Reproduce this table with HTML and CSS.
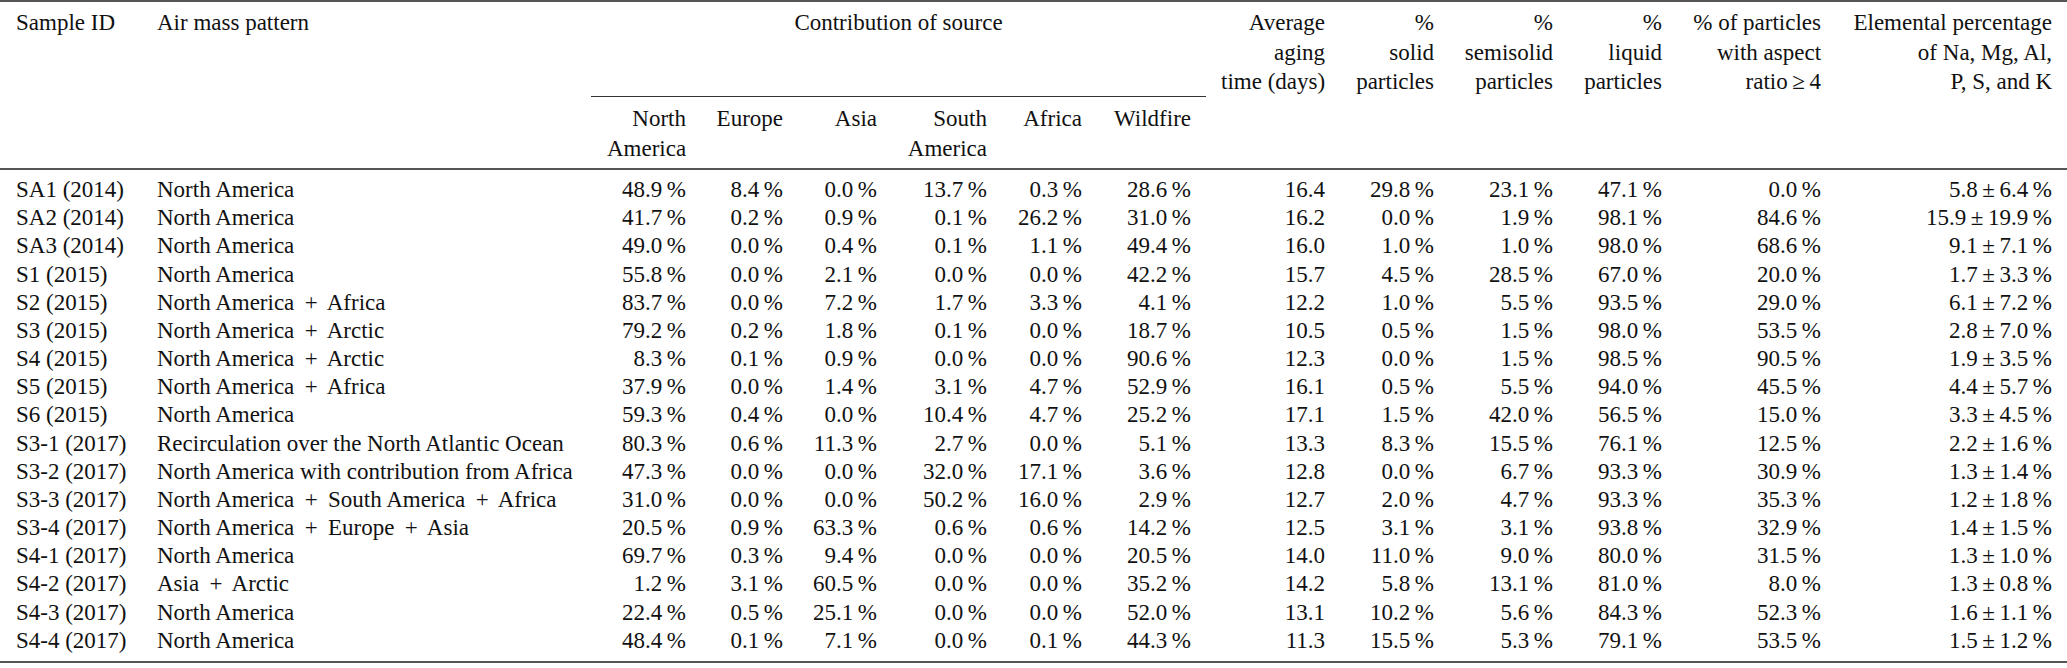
FILE: index.html
```html
<!DOCTYPE html>
<html lang="en">
<head>
<meta charset="utf-8">
<title>Sample table</title>
<link rel="stylesheet" href="styles.css">
</head>
<body>
<table class="data">
  <colgroup>
    <col class="c-id"><col class="c-air"><col class="c-na"><col class="c-eu"><col class="c-as"><col class="c-sa"><col class="c-af"><col class="c-wf"><col class="c-age"><col class="c-sol"><col class="c-semi"><col class="c-liq"><col class="c-asp"><col class="c-el">
  </colgroup>
  <thead>
    <tr class="h1">
      <th rowspan="2" class="l">Sample ID</th>
      <th rowspan="2" class="l">Air mass pattern</th>
      <th colspan="6" class="group">Contribution of source</th>
      <th rowspan="2">Average<br>aging<br>time (days)</th>
      <th rowspan="2">%<br>solid<br>particles</th>
      <th rowspan="2">%<br>semisolid<br>particles</th>
      <th rowspan="2">%<br>liquid<br>particles</th>
      <th rowspan="2">% of particles<br>with aspect<br>ratio&#8201;≥&#8201;4</th>
      <th rowspan="2">Elemental percentage<br>of Na, Mg, Al,<br>P, S, and K</th>
    </tr>
    <tr class="h2">
      <th>North<br>America</th>
      <th>Europe</th>
      <th>Asia</th>
      <th>South<br>America</th>
      <th>Africa</th>
      <th>Wildfire</th>
    </tr>
  </thead>
  <tbody>
    <tr><td>SA1 (2014)</td><td>North America</td><td>48.9&#8201;%</td><td>8.4&#8201;%</td><td>0.0&#8201;%</td><td>13.7&#8201;%</td><td>0.3&#8201;%</td><td>28.6&#8201;%</td><td>16.4</td><td>29.8&#8201;%</td><td>23.1&#8201;%</td><td>47.1&#8201;%</td><td>0.0&#8201;%</td><td>5.8&#8201;±&#8201;6.4&#8201;%</td></tr>
    <tr><td>SA2 (2014)</td><td>North America</td><td>41.7&#8201;%</td><td>0.2&#8201;%</td><td>0.9&#8201;%</td><td>0.1&#8201;%</td><td>26.2&#8201;%</td><td>31.0&#8201;%</td><td>16.2</td><td>0.0&#8201;%</td><td>1.9&#8201;%</td><td>98.1&#8201;%</td><td>84.6&#8201;%</td><td>15.9&#8201;±&#8201;19.9&#8201;%</td></tr>
    <tr><td>SA3 (2014)</td><td>North America</td><td>49.0&#8201;%</td><td>0.0&#8201;%</td><td>0.4&#8201;%</td><td>0.1&#8201;%</td><td>1.1&#8201;%</td><td>49.4&#8201;%</td><td>16.0</td><td>1.0&#8201;%</td><td>1.0&#8201;%</td><td>98.0&#8201;%</td><td>68.6&#8201;%</td><td>9.1&#8201;±&#8201;7.1&#8201;%</td></tr>
    <tr><td>S1 (2015)</td><td>North America</td><td>55.8&#8201;%</td><td>0.0&#8201;%</td><td>2.1&#8201;%</td><td>0.0&#8201;%</td><td>0.0&#8201;%</td><td>42.2&#8201;%</td><td>15.7</td><td>4.5&#8201;%</td><td>28.5&#8201;%</td><td>67.0&#8201;%</td><td>20.0&#8201;%</td><td>1.7&#8201;±&#8201;3.3&#8201;%</td></tr>
    <tr><td>S2 (2015)</td><td>North America &#8201;+&#8201; Africa</td><td>83.7&#8201;%</td><td>0.0&#8201;%</td><td>7.2&#8201;%</td><td>1.7&#8201;%</td><td>3.3&#8201;%</td><td>4.1&#8201;%</td><td>12.2</td><td>1.0&#8201;%</td><td>5.5&#8201;%</td><td>93.5&#8201;%</td><td>29.0&#8201;%</td><td>6.1&#8201;±&#8201;7.2&#8201;%</td></tr>
    <tr><td>S3 (2015)</td><td>North America &#8201;+&#8201; Arctic</td><td>79.2&#8201;%</td><td>0.2&#8201;%</td><td>1.8&#8201;%</td><td>0.1&#8201;%</td><td>0.0&#8201;%</td><td>18.7&#8201;%</td><td>10.5</td><td>0.5&#8201;%</td><td>1.5&#8201;%</td><td>98.0&#8201;%</td><td>53.5&#8201;%</td><td>2.8&#8201;±&#8201;7.0&#8201;%</td></tr>
    <tr><td>S4 (2015)</td><td>North America &#8201;+&#8201; Arctic</td><td>8.3&#8201;%</td><td>0.1&#8201;%</td><td>0.9&#8201;%</td><td>0.0&#8201;%</td><td>0.0&#8201;%</td><td>90.6&#8201;%</td><td>12.3</td><td>0.0&#8201;%</td><td>1.5&#8201;%</td><td>98.5&#8201;%</td><td>90.5&#8201;%</td><td>1.9&#8201;±&#8201;3.5&#8201;%</td></tr>
    <tr><td>S5 (2015)</td><td>North America &#8201;+&#8201; Africa</td><td>37.9&#8201;%</td><td>0.0&#8201;%</td><td>1.4&#8201;%</td><td>3.1&#8201;%</td><td>4.7&#8201;%</td><td>52.9&#8201;%</td><td>16.1</td><td>0.5&#8201;%</td><td>5.5&#8201;%</td><td>94.0&#8201;%</td><td>45.5&#8201;%</td><td>4.4&#8201;±&#8201;5.7&#8201;%</td></tr>
    <tr><td>S6 (2015)</td><td>North America</td><td>59.3&#8201;%</td><td>0.4&#8201;%</td><td>0.0&#8201;%</td><td>10.4&#8201;%</td><td>4.7&#8201;%</td><td>25.2&#8201;%</td><td>17.1</td><td>1.5&#8201;%</td><td>42.0&#8201;%</td><td>56.5&#8201;%</td><td>15.0&#8201;%</td><td>3.3&#8201;±&#8201;4.5&#8201;%</td></tr>
    <tr><td>S3-1 (2017)</td><td>Recirculation over the North Atlantic Ocean</td><td>80.3&#8201;%</td><td>0.6&#8201;%</td><td>11.3&#8201;%</td><td>2.7&#8201;%</td><td>0.0&#8201;%</td><td>5.1&#8201;%</td><td>13.3</td><td>8.3&#8201;%</td><td>15.5&#8201;%</td><td>76.1&#8201;%</td><td>12.5&#8201;%</td><td>2.2&#8201;±&#8201;1.6&#8201;%</td></tr>
    <tr><td>S3-2 (2017)</td><td>North America with contribution from Africa</td><td>47.3&#8201;%</td><td>0.0&#8201;%</td><td>0.0&#8201;%</td><td>32.0&#8201;%</td><td>17.1&#8201;%</td><td>3.6&#8201;%</td><td>12.8</td><td>0.0&#8201;%</td><td>6.7&#8201;%</td><td>93.3&#8201;%</td><td>30.9&#8201;%</td><td>1.3&#8201;±&#8201;1.4&#8201;%</td></tr>
    <tr><td>S3-3 (2017)</td><td>North America &#8201;+&#8201; South America &#8201;+&#8201; Africa</td><td>31.0&#8201;%</td><td>0.0&#8201;%</td><td>0.0&#8201;%</td><td>50.2&#8201;%</td><td>16.0&#8201;%</td><td>2.9&#8201;%</td><td>12.7</td><td>2.0&#8201;%</td><td>4.7&#8201;%</td><td>93.3&#8201;%</td><td>35.3&#8201;%</td><td>1.2&#8201;±&#8201;1.8&#8201;%</td></tr>
    <tr><td>S3-4 (2017)</td><td>North America &#8201;+&#8201; Europe &#8201;+&#8201; Asia</td><td>20.5&#8201;%</td><td>0.9&#8201;%</td><td>63.3&#8201;%</td><td>0.6&#8201;%</td><td>0.6&#8201;%</td><td>14.2&#8201;%</td><td>12.5</td><td>3.1&#8201;%</td><td>3.1&#8201;%</td><td>93.8&#8201;%</td><td>32.9&#8201;%</td><td>1.4&#8201;±&#8201;1.5&#8201;%</td></tr>
    <tr><td>S4-1 (2017)</td><td>North America</td><td>69.7&#8201;%</td><td>0.3&#8201;%</td><td>9.4&#8201;%</td><td>0.0&#8201;%</td><td>0.0&#8201;%</td><td>20.5&#8201;%</td><td>14.0</td><td>11.0&#8201;%</td><td>9.0&#8201;%</td><td>80.0&#8201;%</td><td>31.5&#8201;%</td><td>1.3&#8201;±&#8201;1.0&#8201;%</td></tr>
    <tr><td>S4-2 (2017)</td><td>Asia &#8201;+&#8201; Arctic</td><td>1.2&#8201;%</td><td>3.1&#8201;%</td><td>60.5&#8201;%</td><td>0.0&#8201;%</td><td>0.0&#8201;%</td><td>35.2&#8201;%</td><td>14.2</td><td>5.8&#8201;%</td><td>13.1&#8201;%</td><td>81.0&#8201;%</td><td>8.0&#8201;%</td><td>1.3&#8201;±&#8201;0.8&#8201;%</td></tr>
    <tr><td>S4-3 (2017)</td><td>North America</td><td>22.4&#8201;%</td><td>0.5&#8201;%</td><td>25.1&#8201;%</td><td>0.0&#8201;%</td><td>0.0&#8201;%</td><td>52.0&#8201;%</td><td>13.1</td><td>10.2&#8201;%</td><td>5.6&#8201;%</td><td>84.3&#8201;%</td><td>52.3&#8201;%</td><td>1.6&#8201;±&#8201;1.1&#8201;%</td></tr>
    <tr><td>S4-4 (2017)</td><td>North America</td><td>48.4&#8201;%</td><td>0.1&#8201;%</td><td>7.1&#8201;%</td><td>0.0&#8201;%</td><td>0.1&#8201;%</td><td>44.3&#8201;%</td><td>11.3</td><td>15.5&#8201;%</td><td>5.3&#8201;%</td><td>79.1&#8201;%</td><td>53.5&#8201;%</td><td>1.5&#8201;±&#8201;1.2&#8201;%</td></tr>
  </tbody>
</table>
</body>
</html>
```
FILE: styles.css
```css
html, body {
  margin: 0;
  padding: 0;
  background: #ffffff;
}

body {
  font-family: "Liberation Serif", "Times New Roman", serif;
  font-size: 23px;
  color: #111111;
}

.data {
  width: 2067px;
  table-layout: fixed;
  border-collapse: collapse;
  border-top: 2px solid #555555;
  border-bottom: 2px solid #555555;
}

.data thead {
  border-bottom: 2px solid #555555;
}

.c-id { width: 142px; }
.c-air { width: 449px; }
.c-na { width: 110px; }
.c-eu { width: 97px; }
.c-as { width: 94px; }
.c-sa { width: 110px; }
.c-af { width: 95px; }
.c-wf { width: 109px; }
.c-age { width: 134px; }
.c-sol { width: 109px; }
.c-semi { width: 119px; }
.c-liq { width: 109px; }
.c-asp { width: 159px; }
.c-el { width: 231px; }

.data th {
  font-weight: normal;
  text-align: right;
  vertical-align: top;
  white-space: nowrap;
  line-height: 29.5px;
  padding: 6px 15px 0 15px;
}

.data th.l {
  text-align: left;
}

.data th:first-child,
.data td:first-child {
  padding-left: 16px;
}

.h1 {
  height: 95px;
}

.h1 th.group {
  text-align: center;
  border-bottom: 1px solid #333333;
  padding-left: 0;
  padding-right: 0;
}

.h2 {
  height: 73px;
}

.h2 th {
  padding-top: 7px;
  line-height: 30px;
}

.data td {
  text-align: right;
  white-space: nowrap;
  line-height: 28.17px;
  padding: 0 15px;
}

.data td:nth-child(1),
.data td:nth-child(2) {
  text-align: left;
}

.data tbody tr:first-child td {
  padding-top: 6px;
}

.data tbody tr:last-child td {
  padding-bottom: 6px;
}
```
